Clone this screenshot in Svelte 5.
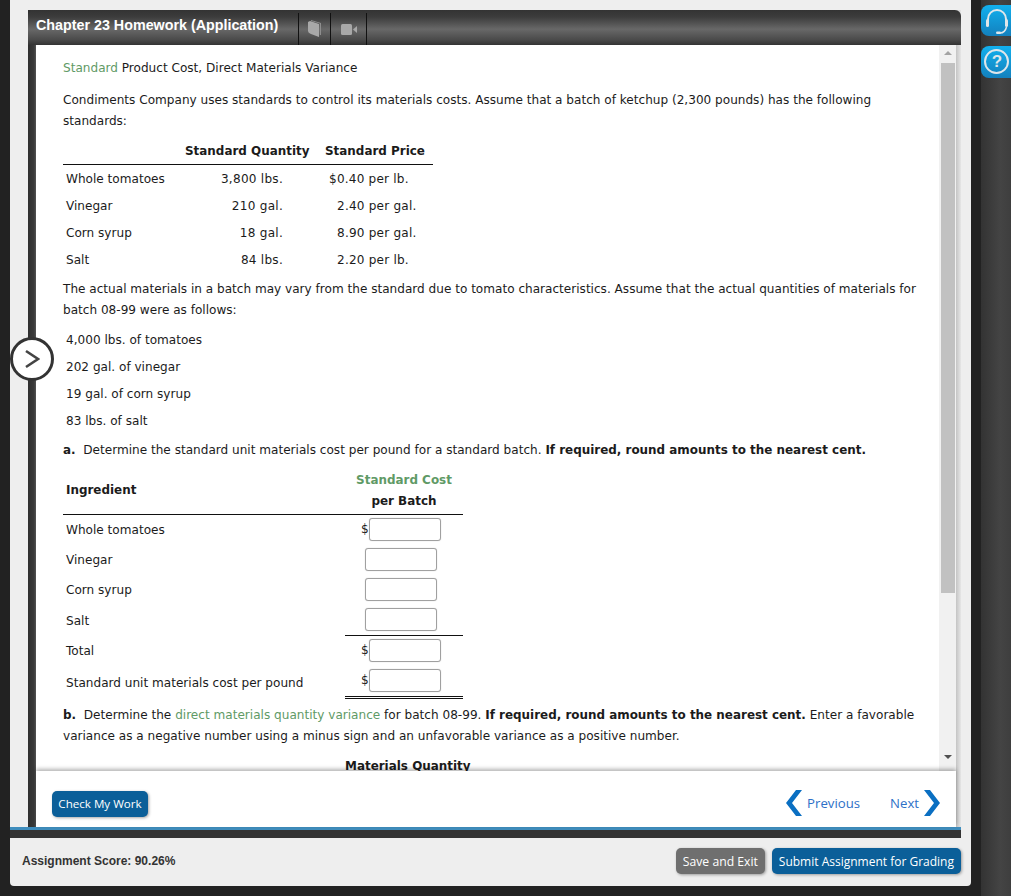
<script lang="ts">
  // Homework player: question pane, nav footer and assignment bar.
  const standards = [
    ['Whole tomatoes', '3,800 lbs.', '$0.40 per lb.'],
    ['Vinegar', '210 gal.', '2.40 per gal.'],
    ['Corn syrup', '18 gal.', '8.90 per gal.'],
    ['Salt', '84 lbs.', '2.20 per lb.']
  ];
  const actuals = ['4,000 lbs. of tomatoes', '202 gal. of vinegar', '19 gal. of corn syrup', '83 lbs. of salt'];
  const costRows = [
    { label: 'Whole tomatoes', dollar: true },
    { label: 'Vinegar', dollar: false },
    { label: 'Corn syrup', dollar: false },
    { label: 'Salt', dollar: false },
    { label: 'Total', dollar: true, rule: true },
    { label: 'Standard unit materials cost per pound', dollar: true, last: true }
  ];
</script>

<div class="page">
  <div class="panel">
    <div class="frame">
      <header class="titlebar">
        <h1>Chapter 23 Homework (Application)</h1>
        <div class="tools">
          <span class="tool book">
            <svg width="14" height="18" viewBox="0 0 14 18"><path d="M0 2 L2 1 L11 4 L11 17 L3 14 Q0 13 0 11 Z" fill="#a8a8a8" /><path d="M3 0 L13 3 L13 15 L11.8 15 L11.8 3.4 L3 1 Z" fill="#8e8e8e" /></svg>
          </span>
          <span class="tool cam">
            <svg width="16" height="11" viewBox="0 0 16 11"><rect width="11" height="11" rx="1.5" fill="#a8a8a8" /><path d="M12 5.5 L16 2 L16 9 Z" fill="#a8a8a8" /></svg>
          </span>
        </div>
      </header>

      <div class="body">
        <div class="scroller">
          <div class="question">
            <p class="title"><span class="term">Standard</span> Product Cost, Direct Materials Variance</p>
            <p class="para">Condiments Company uses standards to control its materials costs. Assume that a batch of ketchup (2,300 pounds) has the following standards:</p>

            <table class="std">
              <thead>
                <tr><th></th><th>Standard Quantity</th><th>Standard Price</th></tr>
              </thead>
              <tbody>
                {#each standards as row}
                  <tr><td>{row[0]}</td><td class="qty">{row[1]}</td><td class="price">{row[2]}</td></tr>
                {/each}
              </tbody>
            </table>

            <p class="para after">The actual materials in a batch may vary from the standard due to tomato characteristics. Assume that the actual quantities of materials for batch 08-99 were as follows:</p>

            <ul class="actuals">
              {#each actuals as item}
                <li>{item}</li>
              {/each}
            </ul>

            <p class="para part-a"><b>a.</b>&nbsp; Determine the standard unit materials cost per pound for a standard batch. <b>If required, round amounts to the nearest cent.</b></p>

            <table class="cost">
              <thead>
                <tr>
                  <th class="ingredient">Ingredient</th>
                  <th class="head"><span class="term">Standard Cost</span><br />per Batch</th>
                </tr>
              </thead>
              <tbody>
                {#each costRows as row}
                  <tr>
                    <td class="label">{row.label}</td>
                    <td class="amount" class:rule={row.rule} class:last={row.last}>
                      {#if row.dollar}<span class="dollar">$</span>{/if}<input type="text" class:plain={!row.dollar} />
                    </td>
                  </tr>
                {/each}
              </tbody>
            </table>

            <p class="para part-b"><b>b.</b>&nbsp; Determine the <span class="term">direct materials quantity variance</span> for batch 08-99. <b>If required, round amounts to the nearest cent.</b> Enter a favorable variance as a negative number using a minus sign and an unfavorable variance as a positive number.</p>

            <div class="next-head">Materials Quantity</div>
          </div>
        </div>

        <div class="scrollbar">
          <span class="arrow up"></span>
          <span class="track"><span class="thumb"></span></span>
          <span class="arrow down"></span>
        </div>
      </div>

      <div class="nav">
        <button type="button" class="btn blue check">Check My Work</button>
        <div class="pager">
          <button type="button" class="link">
            <svg width="16" height="26" viewBox="0 0 16 26"><path d="M10 0 L16 0 L6 13 L16 26 L10 26 L0 13 Z" fill="#0a6fc2" /></svg>
            Previous
          </button>
          <button type="button" class="link">
            Next
            <svg width="16" height="26" viewBox="0 0 16 26"><path d="M6 0 L0 0 L10 13 L0 26 L6 26 L16 13 Z" fill="#0a6fc2" /></svg>
          </button>
        </div>
      </div>
    </div>

    <div class="band"></div>

    <footer class="bottom">
      <span class="score">Assignment Score: 90.26%</span>
      <div class="actions">
        <button type="button" class="btn gray">Save and Exit</button>
        <button type="button" class="btn blue submit">Submit Assignment for Grading</button>
      </div>
    </footer>

    <button type="button" class="expander" aria-label="Expand">
      <svg width="16" height="20" viewBox="0 0 16 20"><path d="M2 2 L14 10 L2 18" fill="none" stroke="#444" stroke-width="2.6" /></svg>
    </button>
  </div>

  <div class="side">
    <button type="button" class="help" aria-label="Support">
      <svg width="26" height="26" viewBox="0 0 26 26" fill="none" stroke="#dfe6ea">
        <path d="M4 14 V11 A9 9 0 0 1 22 11 V14" stroke-width="2" />
        <rect x="2" y="11" width="3" height="8" rx="1.5" fill="#dfe6ea" stroke="none" />
        <rect x="21" y="11" width="3" height="8" rx="1.5" fill="#dfe6ea" stroke="none" />
        <path d="M22.5 19 Q21 25 16 25" stroke-width="1.5" />
        <rect x="12" y="23.5" width="5" height="2.5" rx="1.2" fill="#dfe6ea" stroke="none" />
      </svg>
    </button>
    <button type="button" class="help question-btn" aria-label="Help">?</button>
  </div>
</div>

<style>
  :global(body) {
    margin: 0;
    background: #222;
  }

  .page {
    width: 1011px;
    height: 896px;
    display: flex;
    overflow: hidden;
    background: #222;
    padding-left: 10px;
    box-sizing: border-box;
  }

  .panel {
    position: relative;
    flex: none;
    width: 961px;
    height: 886px;
    box-sizing: border-box;
    padding-top: 10px;
    background: #eee;
    border-radius: 0 0 4px 4px;
    display: flex;
    flex-direction: column;
  }

  .frame {
    margin: 0 10px 0 18px;
    height: 817px;
    display: flex;
    flex-direction: column;
    background: linear-gradient(to right, #2e2e2e 0, #3a3a3a 6px, #555 8px, #555 9px, transparent 9px),
      linear-gradient(to right, #c4c4c4, #e6e6e6);
    background-size: 100% 100%, 5px 100%;
    background-position: 0 0, right top;
    background-repeat: no-repeat;
  }

  .titlebar {
    height: 35px;
    flex: none;
    display: flex;
    align-items: flex-start;
    border-radius: 6px 6px 0 0;
    background: linear-gradient(to bottom, #333 0%, #3c3c3c 20%, #686868 55%, #4a4a4a 85%, #333 100%);
  }

  h1 {
    margin: 7px 0 0 8px;
    width: 262px;
    font: bold 14.3px/16px "Liberation Sans", Arial, sans-serif;
    color: #fff;
    white-space: nowrap;
  }

  .tools {
    display: flex;
    margin-top: 3px;
    border-left: 1px solid #111;
  }

  .tool {
    height: 32px;
    display: flex;
    align-items: center;
    justify-content: center;
    border-right: 1px solid #111;
  }
  .book {
    width: 31px;
  }
  .cam {
    width: 35px;
  }

  .body {
    position: relative;
    flex: 1;
    min-height: 0;
    display: flex;
    margin: 0 5px 0 8px;
    background: #fff;
  }

  .scroller {
    flex: 1;
    min-width: 0;
    overflow: hidden;
  }

  .question {
    padding: 12px 14px 0 27px;
    font: 12.08px/21px "DejaVu Sans", Verdana, sans-serif;
    color: #1b1b1b;
  }

  p {
    margin: 0;
  }

  b,
  th,
  .next-head {
    font-size: 11.95px;
    font-weight: bold;
  }

  .title {
    padding-top: 1px;
    margin-bottom: 11px;
  }

  .term {
    color: #5f9a66;
  }

  table {
    border-collapse: collapse;
    font: inherit;
  }

  .std {
    margin-top: 9px;
    width: 370px;
    table-layout: fixed;
  }
  .std th {
    height: 18px;
    padding: 1px 0 4px;
    border-bottom: 1px solid #111;
    line-height: 17px;
    text-align: center;
    white-space: nowrap;
  }
  .std th:nth-child(1) {
    width: 118px;
  }
  .std th:nth-child(2) {
    width: 134px;
    padding-left: 4px;
    box-sizing: border-box;
    text-align: left;
  }
  .std th:nth-child(3) {
    text-align: left;
    padding-left: 10px;
  }
  .std td {
    height: 27px;
    padding: 0 0 0 3px;
  }
  .std tbody tr:first-child td {
    padding-top: 1px;
  }
  .std .qty {
    text-align: right;
    padding-right: 32px;
    letter-spacing: 0.25px;
  }
  .std .price {
    text-align: left;
    padding-left: 0;
    white-space: nowrap;
    letter-spacing: 0.2px;
  }
  .std tr:first-child .price {
    padding-left: 14px;
  }
  .std tr:not(:first-child) .price {
    padding-left: 22px;
  }

  .para.after {
    margin-top: 5px;
  }

  .actuals {
    list-style: none;
    margin: 0;
    padding: 6px 0 0 3px;
  }
  .actuals li {
    height: 27px;
    line-height: 27px;
  }

  .part-a {
    margin-top: 5px;
  }

  .cost {
    margin-top: 5px;
    width: 400px;
    table-layout: fixed;
  }
  .cost th {
    padding: 0;
    height: 48px;
    border-bottom: 1px solid #111;
  }
  .ingredient {
    text-align: left;
    width: 279px;
    padding-left: 3px !important;
  }
  .cost .head {
    height: 46px;
    padding-top: 2px;
    line-height: 21px;
    text-align: center;
  }
  .cost .label {
    padding: 0 0 0 3px;
  }
  .cost tr:nth-child(4) .label,
  .cost tr:nth-child(5) .label {
    padding-top: 2px;
  }
  .cost tr:nth-child(6) .label {
    padding-top: 4px;
  }
  .cost .amount {
    padding: 0 0 2px;
    text-align: left;
    white-space: nowrap;
    line-height: 0;
    height: 28px;
  }
  .amount.rule {
    border-top: 1px solid #111;
  }
  .amount.last {
    border-bottom: 3px double #111;
  }
  .dollar {
    display: inline-block;
    margin-left: 16px;
    width: 8px;
    line-height: 21px;
    vertical-align: middle;
  }
  input {
    width: 72px;
    height: 23px;
    box-sizing: border-box;
    padding: 0;
    border: 1px solid #a0a0a0;
    border-radius: 3px;
    background: #fff;
    vertical-align: middle;
    box-shadow: 0 0 1px #bbb;
  }
  input.plain {
    margin-left: 20px;
  }

  .part-b {
    margin-top: 6px;
  }

  .next-head {
    margin: 9px 0 0 282px;
    width: 124px;
    text-align: center;
    white-space: nowrap;
  }

  .scrollbar {
    width: 17px;
    flex: none;
    display: flex;
    flex-direction: column;
    align-items: center;
    background: #f1f1f1;
  }
  .arrow {
    flex: none;
    width: 0;
    height: 0;
    margin: 6px 0;
    border-left: 4px solid transparent;
    border-right: 4px solid transparent;
  }
  .arrow.up {
    border-bottom: 4px solid #a3a3a3;
  }
  .arrow.down {
    border-top: 4px solid #505050;
    margin-bottom: 12px;
  }
  .track {
    flex: 1;
    align-self: stretch;
    padding-top: 2px;
  }
  .thumb {
    display: block;
    width: 14px;
    height: 530px;
    margin-left: 2px;
    background: #c1c1c1;
  }

  .nav {
    position: relative;
    flex: none;
    height: 56px;
    margin: 0 5px 0 8px;
    padding: 0 16px;
    display: flex;
    align-items: flex-start;
    justify-content: space-between;
    background: #fff;
    box-sizing: border-box;
    box-shadow: 0 -2px 4px rgba(0, 0, 0, 0.3);
  }

  .btn {
    border: 0;
    border-radius: 5px;
    color: #fff;
    font: 12.2px/27px "Open Sans", sans-serif;
    height: 26px;
    padding: 0 7px;
    box-shadow: 1px 1px 3px rgba(0, 0, 0, 0.35);
    white-space: nowrap;
  }
  .blue {
    background: #0b5f99;
  }
  .gray {
    background: #6f6f6f;
  }
  .check {
    margin-top: 20px;
    width: 96px;
    padding: 0;
    font-size: 11.6px;
    line-height: 24px;
  }
  .submit {
    font-size: 12px;
  }

  .pager {
    display: flex;
    gap: 30px;
    margin: 19px 0 0;
  }
  .link {
    display: flex;
    align-items: center;
    gap: 5px;
    padding: 0;
    border: 0;
    background: transparent;
    color: #2d70c7;
    font: 13.2px/26px "Open Sans", sans-serif;
  }

  .band {
    flex: none;
    height: 11px;
    box-sizing: border-box;
    margin-right: 10px;
    background: #333;
    border-top: 3px solid #3f8dbd;
  }

  .bottom {
    flex: 1;
    display: flex;
    justify-content: space-between;
    padding: 10px 10px 0 12px;
  }
  .score {
    margin-top: 5px;
    font: bold 12px/16px "Liberation Sans", Arial, sans-serif;
    color: #333;
  }
  .actions {
    display: flex;
    gap: 7px;
    align-items: flex-start;
  }

  .expander {
    position: absolute;
    left: 0;
    top: 337px;
    width: 44px;
    height: 44px;
    padding: 0;
    border-radius: 50%;
    border: 3px solid #333;
    background: #fff;
    display: flex;
    align-items: center;
    justify-content: center;
  }

  .side {
    flex: 1;
    margin-left: 10px;
    background: linear-gradient(to right, #333, #444 60%, #3d3d3d);
    display: flex;
    flex-direction: column;
    align-items: flex-end;
    gap: 10px;
    padding-top: 5px;
  }
  .help {
    flex: none;
    width: 32px;
    height: 31px;
    padding: 0;
    border: 0;
    border-radius: 8px 0 0 8px;
    background: linear-gradient(to bottom, #12b0ee, #1380bd);
    display: flex;
    align-items: center;
    justify-content: center;
  }
  .question-btn {
    height: 32px;
    color: #dfe6ea;
    font: bold 17px/22px "Liberation Sans", Arial, sans-serif;
    position: relative;
  }
  .question-btn::before {
    content: '';
    position: absolute;
    left: 3px;
    top: 3px;
    width: 21px;
    height: 21px;
    border: 2.5px solid #dfe6ea;
    border-radius: 50%;
  }
</style>
